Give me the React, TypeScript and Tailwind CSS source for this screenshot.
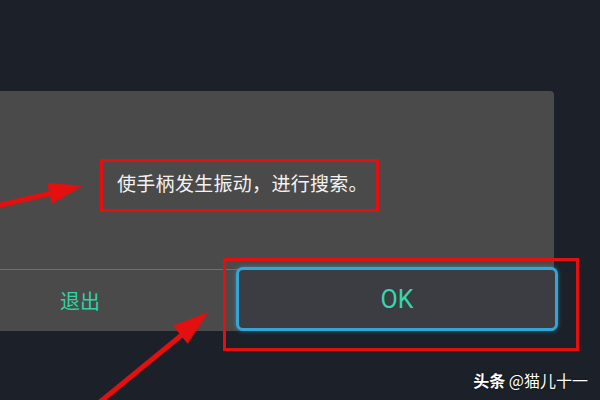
const cjk = { fontFamily: '"Noto Sans CJK SC", "Noto Sans", sans-serif' };

const Arrows = () => (
  <svg className="absolute inset-0 pointer-events-none" width={600} height={400} viewBox="0 0 600 400">
    <g fill="#e3100f" stroke="#e3100f" strokeLinecap="round" strokeLinejoin="round">
      <line x1={-4} y1={206} x2={52} y2={193} strokeWidth={5} />
      <polygon points="81,186 47.6,183.6 52.2,203" strokeWidth={1} />
      <line x1={95} y1={406} x2={183} y2={334} strokeWidth={5} />
      <polygon points="207,313 173.7,326 187.5,343" strokeWidth={1} />
    </g>
  </svg>
);

const App = () => {
  return (
    <div className="relative w-[600px] h-[400px] overflow-hidden bg-[#1c2129]" style={cjk}>
      <div className="pt-[91px]">
        <div className="w-[554px] h-[240px] bg-[#4a4a4a] rounded-tr-[4px] flex flex-col">
          <div className="h-[181px] pl-[117px] pt-[78px]">
            <p className="text-[19px] leading-[28px] text-[#f2f2f2] tracking-[0.3px]">使手柄发生振动，进行搜索。</p>
          </div>
          <div className="h-px bg-[#707070]" />
          <div className="flex-1 flex">
            <div className="w-[236px] shrink-0 flex items-center pl-[60px]">
              <span className="text-[20px] text-[#2fd3a5] leading-none">退出</span>
            </div>
            <button
              className="-mt-[3px] w-[322px] h-[64px] shrink-0 rounded-[7px] border-[3px] border-[#33a6d6] bg-[#3b3d42] flex items-center justify-center shadow-[0_0_4px_rgba(51,166,214,0.6)]"
            >
              <span className="text-[25px] text-[#37d6ad] leading-none" style={{ fontFamily: 'Roboto, "Liberation Sans", sans-serif' }}>
                OK
              </span>
            </button>
          </div>
        </div>
      </div>

      {/* annotation boxes */}
      <div className="absolute left-[100px] top-[159px] w-[279px] h-[53px] border-[3px] border-[#e3100f]" />
      <div className="absolute left-[223px] top-[258px] w-[356px] h-[93px] border-[3px] border-[#e3100f]" />
      <Arrows />

      <div className="absolute right-[12px] top-[370px] text-[16px] leading-[20px] text-white [text-shadow:0_0_2px_rgba(0,0,0,0.8)]">
        <span className="font-bold">头条</span> @猫儿十一
      </div>
    </div>
  );
};

export default App;
